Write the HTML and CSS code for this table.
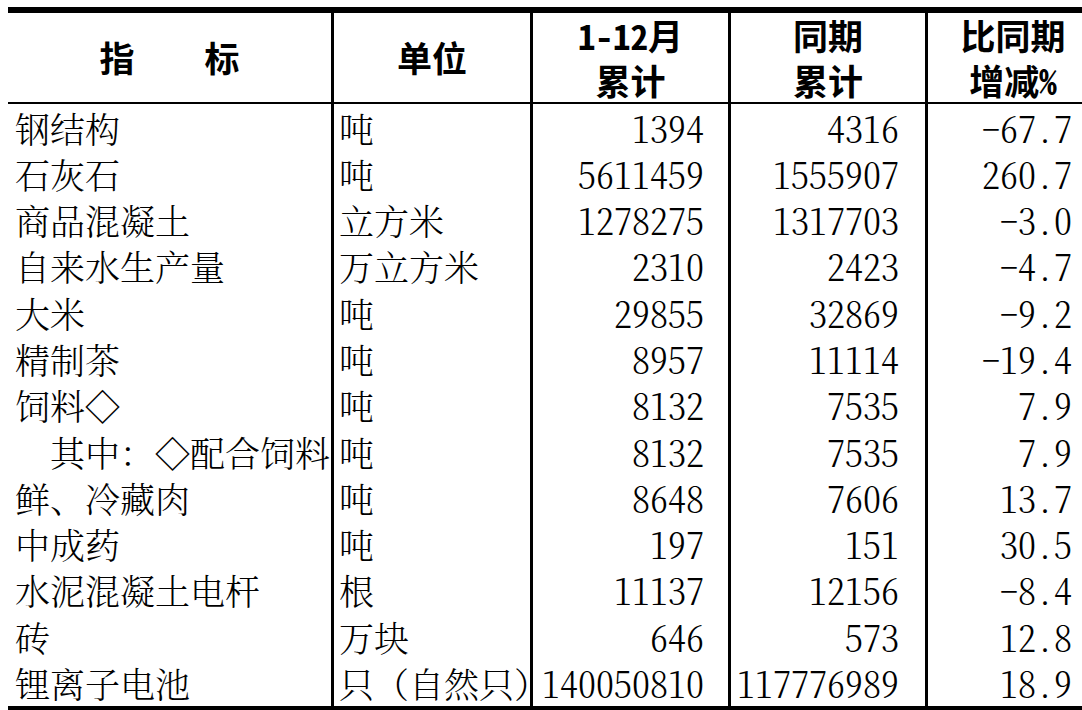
FILE: index.html
```html
<!DOCTYPE html>
<html lang="zh-CN">
<head>
<meta charset="utf-8">
<title>主要工业产品产量</title>
<link rel="stylesheet" href="styles.css">
</head>
<body>
<table class="tbl">
  <colgroup>
    <col class="c1"><col class="c2"><col class="c3"><col class="c4"><col class="c5">
  </colgroup>
  <thead>
    <tr>
      <th>指　　标</th>
      <th>单位</th>
      <th><span class="hw">1-12</span>月<br>累计</th>
      <th>同期<br>累计</th>
      <th>比同期<br>增减<span class="hw">%</span></th>
    </tr>
  </thead>
  <tbody>
    <tr><td class="name">钢结构</td><td class="unit">吨</td><td class="num n3">1394</td><td class="num n4">4316</td><td class="num n5">-67.7</td></tr>
    <tr><td class="name">石灰石</td><td class="unit">吨</td><td class="num n3">5611459</td><td class="num n4">1555907</td><td class="num n5">260.7</td></tr>
    <tr><td class="name">商品混凝土</td><td class="unit">立方米</td><td class="num n3">1278275</td><td class="num n4">1317703</td><td class="num n5">-3.0</td></tr>
    <tr><td class="name">自来水生产量</td><td class="unit">万立方米</td><td class="num n3">2310</td><td class="num n4">2423</td><td class="num n5">-4.7</td></tr>
    <tr><td class="name">大米</td><td class="unit">吨</td><td class="num n3">29855</td><td class="num n4">32869</td><td class="num n5">-9.2</td></tr>
    <tr><td class="name">精制茶</td><td class="unit">吨</td><td class="num n3">8957</td><td class="num n4">11114</td><td class="num n5">-19.4</td></tr>
    <tr><td class="name">饲料◇</td><td class="unit">吨</td><td class="num n3">8132</td><td class="num n4">7535</td><td class="num n5">7.9</td></tr>
    <tr><td class="name sub">其中：◇配合饲料</td><td class="unit">吨</td><td class="num n3">8132</td><td class="num n4">7535</td><td class="num n5">7.9</td></tr>
    <tr><td class="name">鲜、冷藏肉</td><td class="unit">吨</td><td class="num n3">8648</td><td class="num n4">7606</td><td class="num n5">13.7</td></tr>
    <tr><td class="name">中成药</td><td class="unit">吨</td><td class="num n3">197</td><td class="num n4">151</td><td class="num n5">30.5</td></tr>
    <tr><td class="name">水泥混凝土电杆</td><td class="unit">根</td><td class="num n3">11137</td><td class="num n4">12156</td><td class="num n5">-8.4</td></tr>
    <tr><td class="name">砖</td><td class="unit">万块</td><td class="num n3">646</td><td class="num n4">573</td><td class="num n5">12.8</td></tr>
    <tr><td class="name">锂离子电池</td><td class="unit">只（自然只）</td><td class="num n3">140050810</td><td class="num n4">117776989</td><td class="num n5">18.9</td></tr>
  </tbody>
</table>
</body>
</html>
```

FILE: styles.css
```css
html, body {
  margin: 0;
  background: #fff;
}

body {
  width: 1082px;
  height: 710px;
  box-sizing: border-box;
  padding: 7px 0 0 8px;
  overflow: hidden;
  color: #000;
  font-family: "Noto Serif CJK SC", serif;
}

.tbl {
  border-collapse: separate;
  border-spacing: 0;
  table-layout: fixed;
  width: 1090px;
  border-top: 6px solid #000;
  border-bottom: 5px solid #000;
}

.c1 { width: 323px; }
.c2 { width: 199px; }
.c3 { width: 198px; }
.c4 { width: 197px; }
.c5 { width: 173px; }

.tbl th,
.tbl td {
  padding: 0;
  white-space: nowrap;
  overflow: visible;
  box-sizing: border-box;
}

.tbl th + th,
.tbl td + td {
  border-left: 3px solid #000;
}

.tbl thead tr {
  height: 91px;
}

.tbl th {
  border-bottom: 2px solid #000;
  font-family: "Noto Sans CJK SC", sans-serif;
  font-weight: 700;
  font-size: 35px;
  line-height: 44.5px;
  text-align: center;
  vertical-align: middle;
}

.hw {
  font-feature-settings: "hwid" 1;
}

.tbl tbody tr {
  height: 46.3px;
}

.tbl td {
  font-size: 35px;
  font-weight: 300;
  line-height: 44.8px;
  padding-top: 1.5px;
  vertical-align: top;
}

.tbl .name {
  padding-left: 7px;
  text-align: left;
}

.tbl .sub {
  padding-left: 42px;
}

.tbl .unit {
  padding-left: 5px;
  text-align: left;
}

.tbl .num {
  font-size: 36px;
  text-align: right;
  font-feature-settings: "hwid" 1;
}

.tbl .n3 { padding-right: 24px; }
.tbl .n4 { padding-right: 26px; }
.tbl .n5 { padding-right: 26px; }
```
